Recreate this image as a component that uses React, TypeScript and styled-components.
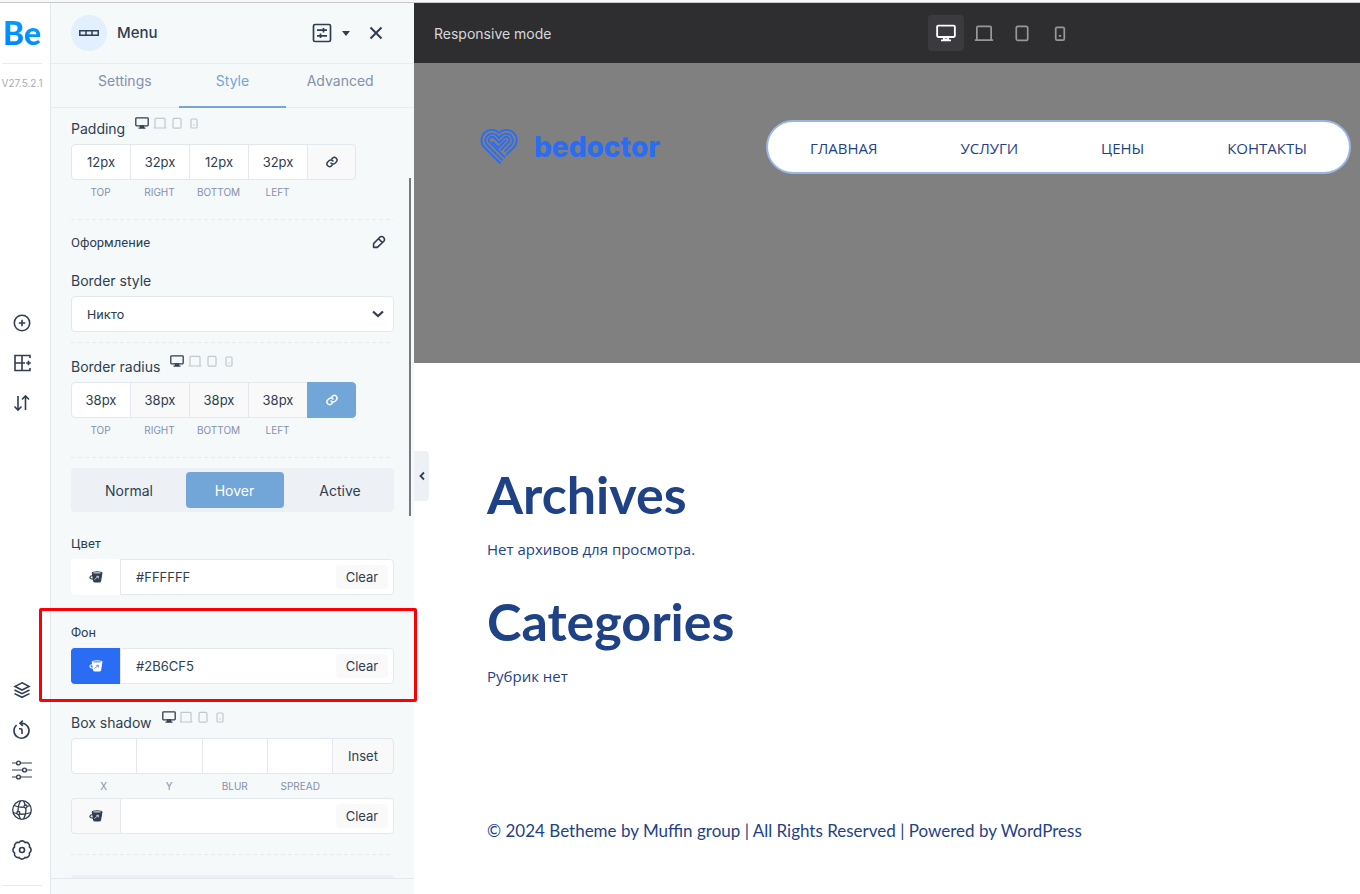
import React from "react";
import styled, { createGlobalStyle, css } from "styled-components";

const ink = "#2f3e50";
const line = "#e3e8ee";
const muted = "#8490ac";
const accent = "#72a5d8";
const navy = "#1f4287";
const brand = "#2b6cf5";
const ui = `Inter, "Open Sans", sans-serif`;
const cyr = `Roboto, "Noto Sans", sans-serif`;

const Global = createGlobalStyle`
  *, *::before, *::after { box-sizing: border-box; }
  body { margin: 0; background: #fff; font-family: ${ui}; font-size: 13px; color: ${ink}; }
  button, input, select { font: inherit; color: inherit; margin: 0; }
  button { cursor: pointer; padding: 0; border: 0; background: none; }
  h1, h2, p { margin: 0; }
  svg { display: block; flex: none; }
`;

const Page = styled.div`
  min-height: 100vh;
  display: flex;
  flex-direction: column;
`;
const TopEdge = styled.div`
  height: 3px;
  background: #f7f8fa;
  border-bottom: 1px solid #c9c9cc;
`;
const Shell = styled.div`
  flex: 1;
  display: flex;
`;

/* Left rail */
const Rail = styled.nav`
  flex: 0 0 51px;
  min-width: 0;
  border-right: 1px solid ${line};
  padding: 0 6px 8px 0;
  display: flex;
  flex-direction: column;
  align-items: center;
  background: #fff;
`;
const Brand = styled.a`
  height: 60px;
  display: flex;
  align-items: center;
  font: 900 32px/60px Lato, sans-serif;
  text-decoration: none;
  color: transparent;
  background: linear-gradient(20deg, #0075ff, #00b2ff);
  background-clip: text;
  -webkit-background-clip: text;
`;
const RailLine = styled.div`
  width: 40px;
  height: 1px;
  background: #e9ebee;
`;
const Version = styled.span`
  font-size: 10px;
  line-height: 16px;
  margin-top: 11px;
  color: #a6adb8;
`;
const RailGroup = styled.div<{ $bottom?: boolean }>`
  display: flex;
  flex-direction: column;
  margin: ${(p) => (p.$bottom ? "auto 0 15px" : "212px 0 0")};
`;
const RailButton = styled.button`
  width: 40px;
  height: 40px;
  display: grid;
  place-items: center;
`;

/* Settings panel */
const Panel = styled.aside`
  position: relative;
  flex: 0 0 363px;
  min-width: 0;
  background: #f5f9fa;
  display: flex;
  flex-direction: column;
`;
const PanelHeader = styled.header`
  height: 61px;
  border-bottom: 1px solid #e9edf1;
  padding: 0 30px 0 20px;
  display: flex;
  align-items: center;
`;
const Badge = styled.span`
  width: 36px;
  height: 36px;
  border-radius: 50%;
  background: #e1effe;
  display: grid;
  place-items: center;
  margin-right: 10px;
`;
const Title = styled.h1`
  font-size: 15px;
  font-weight: 500;
  line-height: 20px;
  margin-right: auto;
`;
const HeaderButton = styled.button`
  display: flex;
  align-items: center;
  gap: 10px;
  margin-left: 18px;
`;
const Tabs = styled.div`
  height: 44px;
  display: grid;
  grid-template-columns: repeat(3, 1fr);
  padding: 0 20px;
  border-bottom: 1px solid #e9edf1;
`;
const Tab = styled.button<{ $active?: boolean }>`
  height: 44px;
  padding-bottom: 10px;
  border-bottom: 2px solid ${(p) => (p.$active ? accent : "transparent")};
  font-size: 14px;
  color: ${(p) => (p.$active ? accent : muted)};
`;
const PanelBody = styled.div`
  padding: 4px 20px 0;
`;
const PanelFooter = styled.div`
  flex: 1;
  min-height: 16px;
  border-top: 1px solid ${line};
`;
const Scrollbar = styled.div`
  position: absolute;
  top: 175px;
  right: 3px;
  width: 2px;
  height: 338px;
  background: #757a7f;
`;
const Collapse = styled.button`
  position: absolute;
  left: 100%;
  top: 448px;
  width: 15px;
  height: 50px;
  border-radius: 0 4px 4px 0;
  background: #edf1f5;
  display: grid;
  place-items: center;
`;

const LabelRow = styled.div<{ $top?: number }>`
  display: flex;
  align-items: flex-start;
  gap: 10px;
  height: 28px;
  margin: ${(p) => p.$top ?? 0}px 0 4px;
`;
const RowLabel = styled.span`
  font-size: 14px;
  line-height: 20px;
  padding-top: 7px;
`;
const Devices = styled.span`
  display: flex;
  align-items: center;
  height: 22px;
  color: #c0c8d0;
`;
const DeviceButton = styled.button<{ $on?: boolean }>`
  width: 17px;
  height: 16px;
  display: flex;
  align-items: center;
  justify-content: center;
  color: ${(p) => (p.$on ? ink : "#c0c8d0")};
  &:first-child { width: 14px; margin-right: 2px; }
`;
const Cells = styled.div`
  display: flex;
`;
const cell = css`
  height: 36px;
  border: 1px solid ${line};
`;
const CellInput = styled.input<{ $wide?: boolean }>`
  ${cell}
  ${(p) => (p.$wide ? "flex: 1 1 0;" : "flex: 0 0 60px;")}
  width: 0;
  min-width: 0;
  margin-right: -1px;
  padding: 0;
  text-align: center;
  background: #fff;
  outline: 0;
  &:read-only { background: #f9f9f9; }
  &:first-child { border-radius: 4px 0 0 4px; }
`;
const CellButton = styled.button<{ $on?: boolean; $wide?: boolean }>`
  ${cell}
  flex: 0 0 ${(p) => (p.$wide ? 62 : 49)}px;
  display: grid;
  place-items: center;
  border-radius: 0 4px 4px 0;
  background: #f9f9f9;
  ${(p) => p.$on && css`background: ${accent}; border-color: ${accent}; color: #fff;`}
`;
const Captions = styled.div<{ $wide?: boolean }>`
  display: grid;
  grid-template-columns: ${(p) => (p.$wide ? "repeat(4, 1fr) 61px" : "repeat(4, 59px)")};
  margin: 4px 0;
  text-align: center;
  font-size: 10px;
  line-height: 16px;
  color: ${muted};
`;
const Divider = styled.hr<{ $top: number }>`
  height: 1px;
  border: 0;
  margin: ${(p) => p.$top}px 0 0;
  background: repeating-linear-gradient(90deg, #e6ebee 0 4px, transparent 4px 7px);
`;
const SubHead = styled.div`
  display: flex;
  justify-content: space-between;
  align-items: center;
  margin-top: 12px;
  height: 20px;
  padding-right: 8px;
  font-family: ${cyr};
`;
const Field = styled.div<{ $top: number }>`
  position: relative;
  margin-top: ${(p) => p.$top}px;
`;
const FieldLabel = styled.label<{ $cyr?: boolean }>`
  display: block;
  font-size: ${(p) => (p.$cyr ? 13 : 14)}px;
  line-height: 20px;
  margin-bottom: 5px;
  ${(p) => p.$cyr && `font-family: ${cyr};`}
`;
const SelectBox = styled.div`
  position: relative;
  svg { position: absolute; right: 10px; top: 12px; pointer-events: none; }
`;
const Select = styled.select`
  ${cell}
  display: block;
  appearance: none;
  width: 100%;
  padding: 0 15px;
  border-radius: 4px;
  background: #fff;
  font-family: ${cyr};
`;
const Segments = styled.div`
  display: flex;
  align-items: center;
  justify-content: space-between;
  height: 44px;
  margin-top: 10px;
  padding: 0 5px 0 9px;
  border-radius: 4px;
  background: #edf1f6;
`;
const Segment = styled.button<{ $active?: boolean }>`
  width: 98px;
  height: 36px;
  border-radius: 4px;
  font-size: 14px;
  ${(p) => p.$active && css`background: ${accent}; color: #fff;`}
`;
const ColorRow = styled.div`
  display: flex;
  height: 36px;
`;
const Swatch = styled.button<{ $color?: string }>`
  flex: 0 0 49px;
  display: grid;
  place-items: center;
  border: 1px solid ${(p) => p.$color ?? line};
  border-right: 0;
  border-radius: 4px 0 0 4px;
  background: ${(p) => p.$color ?? "#f9f9f9"};
  color: ${(p) => (p.$color === brand ? "#fff" : ink)};
`;
const ColorValue = styled.div`
  flex: 1;
  min-width: 0;
  display: flex;
  align-items: center;
  padding: 0 5px 0 15px;
  border: 1px solid ${line};
  border-radius: 0 4px 4px 0;
  background: #fff;
`;
const ColorInput = styled.input`
  flex: 1;
  min-width: 0;
  padding: 0;
  border: 0;
  outline: 0;
  background: none;
`;
const Clear = styled.button`
  flex: 0 0 52px;
  height: 24px;
  border-radius: 4px;
  background: #f9f9f9;
`;
const Highlight = styled.div`
  position: absolute;
  inset: -15px -23px -18px -32px;
  border: 3px solid #fb0007;
  border-radius: 2px;
  pointer-events: none;
  z-index: 1;
`;
const NextBlock = styled.div`
  height: 3px;
  margin-top: 20px;
  border-radius: 4px 4px 0 0;
  background: #edf1f6;
`;

/* Preview */
const Preview = styled.main`
  flex: 1;
  min-width: 0;
`;
const Toolbar = styled.div`
  height: 60px;
  padding-left: 20px;
  display: flex;
  align-items: center;
  background: #2e2e30;
  color: #d7d7d9;
`;
const Mode = styled.span`
  flex: 0 1 494px;
  font-size: 14px;
`;
const ModeButtons = styled.div`
  display: flex;
  gap: 2px;
`;
const ModeButton = styled.button<{ $active?: boolean }>`
  width: 36px;
  height: 36px;
  border-radius: 4px;
  display: grid;
  place-items: center;
  color: ${(p) => (p.$active ? "#fff" : "#98989a")};
  background: ${(p) => (p.$active ? "#3b3a3f" : "none")};
`;
const Hero = styled.header`
  height: 300px;
  padding: 57px 9px 0 66px;
  display: flex;
  justify-content: space-between;
  align-items: flex-start;
  background: #808080;
`;
const Logo = styled.a`
  display: flex;
  align-items: center;
  gap: 16px;
  height: 54px;
  color: ${brand};
  font-size: 28px;
  font-weight: 800;
  text-decoration: none;
`;
const Pill = styled.nav`
  flex: 0 1 585px;
  height: 54px;
  padding: 2px 42px 0;
  display: flex;
  align-items: center;
  justify-content: space-between;
  border: 2px solid #9ab7e4;
  border-radius: 27px;
  background: #fff;
  font: 500 15px/24px "Open Sans", "Noto Sans", sans-serif;
`;
const PillLink = styled.a`
  color: ${navy};
  text-decoration: none;
`;
const Article = styled.div`
  padding: 101px 73px 40px;
  color: ${navy};
`;
const Heading = styled.h2`
  font: 700 52px/60px Lato, sans-serif;
  margin-bottom: 13px;
`;
const Note = styled.p`
  font: 15px/24px "Open Sans", "Noto Sans", sans-serif;
  margin-bottom: 30px;
`;
const Copyright = styled.p`
  font: 17px/24px Lato, sans-serif;
  margin-top: 131px;
`;

const Svg = ({ w, h = w, vb, sw = 1.6, children }: { w: number; h?: number; vb?: string; sw?: number; children: React.ReactNode }) => (
  <svg width={w} height={h} viewBox={vb ?? `0 0 ${w} ${h}`} fill="none" stroke="currentColor" strokeWidth={sw} aria-hidden="true">
    {children}
  </svg>
);

const Desktop = ({ w = 14 }) => (
  <Svg w={w} h={w} vb="0 0 14 14" sw={1.3}>
    <rect x="0.8" y="1.8" width="12.4" height="8" rx="0.8" />
    <path d="M5.5 10h3v1.6h-3zM3.5 12.2h7" />
  </Svg>
);
const Laptop = ({ w = 14 }) => (
  <Svg w={w} h={w} vb="0 0 14 14" sw={1.2}>
    <path d="M2 11.5V3.2q0-.8.8-.8h8.4q.8 0 .8.8v8.3M.6 12h12.8" />
  </Svg>
);
const Tablet = ({ w = 14 }) => (
  <Svg w={w} h={w} vb="0 0 14 14" sw={1.2}>
    <rect x="3" y="2.4" width="8" height="9.8" rx="1.2" />
  </Svg>
);
const Phone = ({ w = 14 }) => (
  <Svg w={w} h={w} vb="0 0 14 14" sw={1.2}>
    <rect x="4" y="3" width="6" height="9" rx="1" />
    <path d="M6.2 9h1.600" />
  </Svg>
);
const LinkIcon = () => (
  <Svg w={12} vb="0 0 24 24" sw={3}>
    <g strokeLinecap="round" strokeLinejoin="round">
      <path d="M10 14a5.5 5.5 0 0 0 8 .5l3-3a5.4 5.4 0 0 0-7.500-7.600L11.500 6" />
      <path d="M14 10a5.500 5.500 0 0 0-8-.5l-3 3a5.400 5.400 0 0 0 7.500 7.600l2-2" />
    </g>
  </Svg>
);
const Bucket = ({ detail = "#fff" }: { detail?: string }) => (
  <Svg w={14} h={12} sw={1.1}>
    <path d="M3.400 2.300L4.600 9.800q.2 1.200 1.400 1.200h4.200q1.200 0 1.400-1.200l1.200-7.500z" fill="currentColor" />
    <ellipse cx="8.100" cy="2.100" rx="4.700" ry="1.300" />
    <path d="M3.700 4.500Q1 4.800.8 6.300 1 8 4.200 8.200" />
    <path d="M5.500 8.500l3.700-3M7.300 5.300h2.100v2.100" stroke={detail} strokeOpacity=".8" strokeWidth=".9" />
    <path d="M4.500 2.100h7" stroke={detail} strokeOpacity=".65" strokeWidth=".8" />
  </Svg>
);

const PlusCircle = () => (
  <Svg w={18}><circle cx="9" cy="9" r="7.700" /><path d="M9 5.800v6.400M5.800 9h6.400" /></Svg>
);
const GridPlus = () => (
  <Svg w={20}>
    <path d="M18 5V2.500H3v15h15V15M10 2.500v15M3 10h10M16.500 7.700v4.600M14.200 10h4.600" />
  </Svg>
);
const UpDown = () => (
  <Svg w={18}><path d="M5 2v14M1.500 12.500L5 16l3.500-3.500M12.500 16V2M9 5.500L12.500 2 16 5.500" /></Svg>
);
const Layers = () => (
  <Svg w={18}>
    <path d="M9 1.800l7 3.600-7 3.600-7-3.600zM1.500 9l7.500 3.700L16.500 9M1.500 12.600L9 16.300l7.500-3.700" />
  </Svg>
);
const History = () => (
  <Svg w={20}>
    <path d="M4.600 5A7.500 7.500 0 1 0 10 3.200H8M10.800.6L8 3.200l2.800 2.600M7 8.800h1.700q1.300 0 1.300 1.300v4" />
  </Svg>
);
const Sliders = () => (
  <Svg w={20} sw={1.400}>
    <path d="M0 3h4.500M8.500 3H20M0 10h10.500M14.500 10H20M0 17h4.500M8.500 17H20" strokeOpacity=".65" />
    <circle cx="6.500" cy="3" r="1.900" /><circle cx="12.500" cy="10" r="1.900" /><circle cx="6.500" cy="17" r="1.900" />
  </Svg>
);
const Globe = () => (
  <Svg w={20} sw={1.300}>
    <circle cx="10" cy="10" r="9.300" />
    <path d="M2 5.500q8 3.500 16 0M1 12.500q9 3.500 18 0M8.500.8Q3.500 10 8.500 19.200M11.500.8Q16.500 10 11.500 19.200" />
    <circle cx="13.500" cy="6.500" r="1.500" fill="#fff" /><circle cx="6.300" cy="13" r="1.500" fill="#fff" />
  </Svg>
);
const Gear = () => (
  <Svg w={20} sw={1.600}>
    <path strokeLinejoin="round" d="M17.400 13A3.500 3.500 0 0 1 13 17.400A3.500 3.500 0 0 1 7 17.400A3.500 3.500 0 0 1 2.600 13A3.500 3.500 0 0 1 2.600 7A3.500 3.500 0 0 1 7 2.600A3.500 3.500 0 0 1 13 2.600A3.500 3.500 0 0 1 17.400 7A3.500 3.500 0 0 1 17.400 13z" />
    <circle cx="10" cy="10" r="2.500" />
  </Svg>
);
const Heart = () => (
  <Svg w={38} h={36} sw={1.900}>
    <path d="M20.500 34.500L4.500 18.500a10.300 10.300 0 0 1 14.600-14.600A10.300 10.300 0 0 1 33.700 18.500L26 26.200" />
    <path d="M22.500 31.300L7 15.900a6.800 6.800 0 0 1 9.600-9.600l2.500 2.500 2.500-2.500a6.800 6.800 0 0 1 9.600 9.600L24.500 22.600" />
    <path d="M25 28.500L9.600 13.200a3.200 3.200 0 0 1 4.500-4.500l5 5 5-5a3.200 3.200 0 0 1 4.500 4.500L20.500 21.300" />
    <path d="M19 19.500l-6.800-6.800M19 18.200l7.300-7.300" />
  </Svg>
);

const deviceList: [string, React.FC<{ w?: number }>][] = [
  ["Desktop", Desktop], ["Laptop", Laptop], ["Tablet", Tablet], ["Phone", Phone],
];
const DevicePicker = () => (
  <Devices>
    {deviceList.map(([name, Icon], i) => (
      <DeviceButton key={name} aria-label={name} $on={i === 0}><Icon /></DeviceButton>
    ))}
  </Devices>
);

const sides = ["TOP", "RIGHT", "BOTTOM", "LEFT"];
const FourSides = ({ name, values, linked }: { name: string; values: string[]; linked?: boolean }) => (
  <>
    <Cells>
      {values.map((v, i) => (
        <CellInput key={i} aria-label={`${name} ${sides[i].toLowerCase()}`} defaultValue={v} readOnly={linked && i > 0} />
      ))}
      <CellButton aria-label={`Link ${name} values`} $on={linked}><LinkIcon /></CellButton>
    </Cells>
    <Captions>{sides.map((s) => <span key={s}>{s}</span>)}</Captions>
  </>
);
const ColorControl = ({ id, color, value, label }: { id: string; color?: string; value?: string; label?: string }) => (
  <ColorRow>
    <Swatch aria-label="Pick color" $color={color}><Bucket detail={color} /></Swatch>
    <ColorValue>
      <ColorInput id={id} defaultValue={value} aria-label={label} />
      <Clear>Clear</Clear>
    </ColorValue>
  </ColorRow>
);

export default function App() {
  return (
    <Page>
      <Global />
      <TopEdge />
      <Shell>
        <Rail>
          <Brand href="#">Be</Brand>
          <RailLine />
          <Version>V27.5.2.1</Version>
          <RailGroup>
            <RailButton aria-label="Add element"><PlusCircle /></RailButton>
            <RailButton aria-label="Templates"><GridPlus /></RailButton>
            <RailButton aria-label="Import and export"><UpDown /></RailButton>
          </RailGroup>
          <RailGroup $bottom>
            <RailButton aria-label="Navigator"><Layers /></RailButton>
            <RailButton aria-label="History"><History /></RailButton>
            <RailButton aria-label="Options"><Sliders /></RailButton>
            <RailButton aria-label="Site"><Globe /></RailButton>
            <RailButton aria-label="Preferences"><Gear /></RailButton>
          </RailGroup>
          <RailLine />
        </Rail>

        <Panel>
          <PanelHeader>
            <Badge>
              <Svg w={20} h={6} sw={1.500}><path d="M.8.8h18.400v4.400H.8zM7 .8v4.400M13 .8v4.400" /></Svg>
            </Badge>
            <Title>Menu</Title>
            <HeaderButton aria-label="Presets">
              <Svg w={20} sw={1.700}>
                <rect x="1.500" y="1.500" width="17" height="17" rx="1.500" />
                <path d="M5 7.200h10M11.500 5v4.400M5 12.800h10M8.500 10.600V15" />
              </Svg>
              <Svg w={8} h={5} sw={0}><path d="M0 0h8L4 5z" fill="currentColor" /></Svg>
            </HeaderButton>
            <HeaderButton aria-label="Close">
              <Svg w={16} sw={2}><path d="M2.500 2.500l11 11M13.500 2.500l-11 11" /></Svg>
            </HeaderButton>
          </PanelHeader>
          <Tabs>
            <Tab>Settings</Tab>
            <Tab $active>Style</Tab>
            <Tab>Advanced</Tab>
          </Tabs>
          <PanelBody>
            <LabelRow><RowLabel>Padding</RowLabel><DevicePicker /></LabelRow>
            <FourSides name="Padding" values={["12px", "32px", "12px", "32px"]} />
            <Divider $top={19} />

            <SubHead>
              Оформление
              <button aria-label="Edit typography">
                <Svg w={14} sw={1.600}>
                  <path strokeLinejoin="round" d="M1.600 12.400V8.600l6.200-6.400q1.800-1.500 3.800.2 1.700 2 .2 3.800l-6.400 6.200zM6.600 3.800l3.600 3.600" />
                </Svg>
              </button>
            </SubHead>

            <Field $top={19}>
              <FieldLabel htmlFor="border-style">Border style</FieldLabel>
              <SelectBox>
                <Select id="border-style" defaultValue="none"><option value="none">Никто</option></Select>
                <Svg w={12} sw={2.200}><path d="M1 3.500l5 4.500 5-4.500" /></Svg>
              </SelectBox>
            </Field>
            <Divider $top={10} />

            <LabelRow $top={7}><RowLabel>Border radius</RowLabel><DevicePicker /></LabelRow>
            <FourSides name="Border radius" values={["38px", "38px", "38px", "38px"]} linked />
            <Divider $top={19} />

            <Segments>
              <Segment>Normal</Segment>
              <Segment $active>Hover</Segment>
              <Segment>Active</Segment>
            </Segments>

            <Field $top={22}>
              <FieldLabel htmlFor="text-color" $cyr>Цвет</FieldLabel>
              <ColorControl id="text-color" color="#ffffff" value="#FFFFFF" />
            </Field>
            <Field $top={28}>
              <FieldLabel htmlFor="bg-color" $cyr>Фон</FieldLabel>
              <ColorControl id="bg-color" color={brand} value="#2B6CF5" />
              <Highlight />
            </Field>

            <LabelRow $top={22}><RowLabel>Box shadow</RowLabel><DevicePicker /></LabelRow>
            <Cells>
              {["X", "Y", "Blur", "Spread"].map((n) => <CellInput key={n} $wide aria-label={`Shadow ${n}`} />)}
              <CellButton $wide>Inset</CellButton>
            </Cells>
            <Captions $wide><span>X</span><span>Y</span><span>BLUR</span><span>SPREAD</span></Captions>
            <ColorControl id="shadow-color" label="Shadow color" />
            <Divider $top={20} />
            <NextBlock />
          </PanelBody>
          <PanelFooter />
          <Scrollbar />
          <Collapse aria-label="Collapse panel">
            <Svg w={8} h={10} sw={1.800}><path d="M6 1.500L2.500 5 6 8.500" /></Svg>
          </Collapse>
        </Panel>

        <Preview>
          <Toolbar>
            <Mode>Responsive mode</Mode>
            <ModeButtons>
              {deviceList.map(([name, Icon], i) => (
                <ModeButton key={name} aria-label={`${name} preview`} $active={i === 0}><Icon w={20} /></ModeButton>
              ))}
            </ModeButtons>
          </Toolbar>
          <Hero>
            <Logo href="#"><Heart />bedoctor</Logo>
            <Pill>
              {["ГЛАВНАЯ", "УСЛУГИ", "ЦЕНЫ", "КОНТАКТЫ"].map((t) => <PillLink key={t} href="#">{t}</PillLink>)}
            </Pill>
          </Hero>
          <Article>
            <Heading>Archives</Heading>
            <Note>Нет архивов для просмотра.</Note>
            <Heading>Categories</Heading>
            <Note>Рубрик нет</Note>
            <Copyright>© 2024 Betheme by Muffin group | All Rights Reserved | Powered by WordPress</Copyright>
          </Article>
        </Preview>
      </Shell>
    </Page>
  );
}
